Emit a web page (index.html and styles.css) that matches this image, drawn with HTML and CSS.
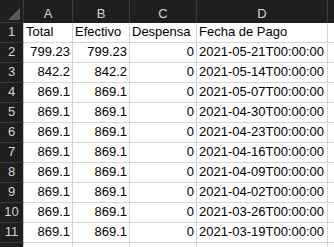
FILE: index.html
```html
<!DOCTYPE html>
<html>
<head>
<meta charset="utf-8">
<link rel="stylesheet" href="styles.css">
</head>
<body>
<div class="sheet">
  <div class="corner"><span class="tri"></span></div>
  <div class="colhead">A</div>
  <div class="colhead">B</div>
  <div class="colhead">C</div>
  <div class="colhead">D</div>
  <div class="colhead last"></div>

  <div class="rowhead">1</div>
  <div class="cell">Total</div>
  <div class="cell">Efectivo</div>
  <div class="cell">Despensa</div>
  <div class="cell">Fecha de Pago</div>
  <div class="cell"></div>

  <div class="rowhead">2</div>
  <div class="cell num">799.23</div>
  <div class="cell num">799.23</div>
  <div class="cell num">0</div>
  <div class="cell">2021-05-21T00:00:00</div>
  <div class="cell"></div>

  <div class="rowhead">3</div>
  <div class="cell num">842.2</div>
  <div class="cell num">842.2</div>
  <div class="cell num">0</div>
  <div class="cell">2021-05-14T00:00:00</div>
  <div class="cell"></div>

  <div class="rowhead">4</div>
  <div class="cell num">869.1</div>
  <div class="cell num">869.1</div>
  <div class="cell num">0</div>
  <div class="cell">2021-05-07T00:00:00</div>
  <div class="cell"></div>

  <div class="rowhead">5</div>
  <div class="cell num">869.1</div>
  <div class="cell num">869.1</div>
  <div class="cell num">0</div>
  <div class="cell">2021-04-30T00:00:00</div>
  <div class="cell"></div>

  <div class="rowhead">6</div>
  <div class="cell num">869.1</div>
  <div class="cell num">869.1</div>
  <div class="cell num">0</div>
  <div class="cell">2021-04-23T00:00:00</div>
  <div class="cell"></div>

  <div class="rowhead">7</div>
  <div class="cell num">869.1</div>
  <div class="cell num">869.1</div>
  <div class="cell num">0</div>
  <div class="cell">2021-04-16T00:00:00</div>
  <div class="cell"></div>

  <div class="rowhead">8</div>
  <div class="cell num">869.1</div>
  <div class="cell num">869.1</div>
  <div class="cell num">0</div>
  <div class="cell">2021-04-09T00:00:00</div>
  <div class="cell"></div>

  <div class="rowhead">9</div>
  <div class="cell num">869.1</div>
  <div class="cell num">869.1</div>
  <div class="cell num">0</div>
  <div class="cell">2021-04-02T00:00:00</div>
  <div class="cell"></div>

  <div class="rowhead">10</div>
  <div class="cell num">869.1</div>
  <div class="cell num">869.1</div>
  <div class="cell num">0</div>
  <div class="cell">2021-03-26T00:00:00</div>
  <div class="cell"></div>

  <div class="rowhead">11</div>
  <div class="cell num">869.1</div>
  <div class="cell num">869.1</div>
  <div class="cell num">0</div>
  <div class="cell">2021-03-19T00:00:00</div>
  <div class="cell"></div>

  <div class="rowhead"></div>
  <div class="cell"></div>
  <div class="cell"></div>
  <div class="cell"></div>
  <div class="cell"></div>
  <div class="cell"></div>
</div>
</body>
</html>
```
FILE: styles.css
```css
html, body {
  margin: 0;
  padding: 0;
  background: #ffffff;
  overflow: hidden;
}

.sheet {
  display: grid;
  grid-template-columns: 24px 49px 57px 67px 131px 40px;
  grid-template-rows: 23px repeat(12, 20px);
  width: 334px;
  height: 247px;
  overflow: hidden;
  font-family: "Liberation Sans", Arial, sans-serif;
  font-size: 13px;
  color: #000000;
}

.corner {
  background: #1f1f1f;
  border-right: 1px solid #3a3a3a;
  border-bottom: 1px solid #3a3a3a;
  position: relative;
  box-sizing: border-box;
}

.tri {
  position: absolute;
  right: 3px;
  bottom: 2px;
  width: 0;
  height: 0;
  border-left: 12px solid transparent;
  border-bottom: 12px solid #5a5a5a;
}

.colhead {
  background: #1f1f1f;
  color: #d4d4d4;
  border-right: 1px solid #3a3a3a;
  box-sizing: border-box;
  display: flex;
  align-items: center;
  justify-content: center;
  padding-top: 3px;
}

.colhead.last {
  border-right: none;
}

.rowhead {
  background: #1f1f1f;
  color: #d4d4d4;
  border-bottom: 1px solid #3a3a3a;
  border-right: 1px solid #c8c8c8;
  box-sizing: border-box;
  display: flex;
  align-items: flex-end;
  justify-content: center;
  padding-bottom: 3px;
}

.cell {
  border-right: 1px solid #d4d4d4;
  border-bottom: 1px solid #d4d4d4;
  box-sizing: border-box;
  display: flex;
  align-items: flex-end;
  padding: 0 0 3px 2px;
  white-space: nowrap;
  overflow: hidden;
}

.cell.num {
  justify-content: flex-end;
  padding: 0 2px 3px 0;
}
```
